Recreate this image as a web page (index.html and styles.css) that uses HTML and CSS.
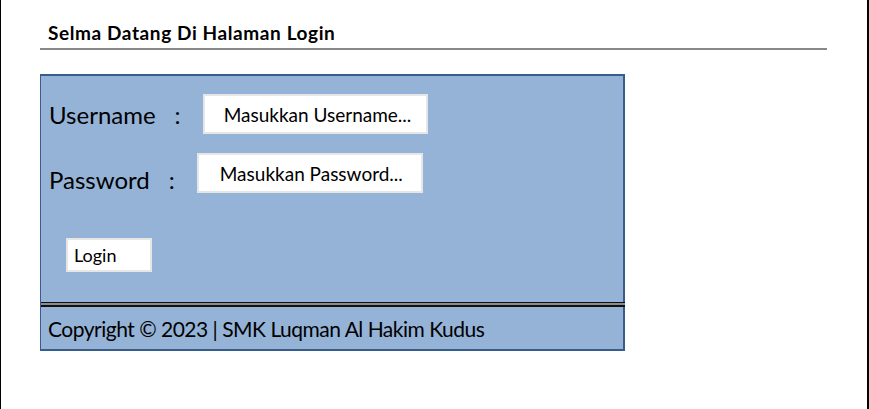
FILE: index.html
```html
<!DOCTYPE html>
<html lang="id">
<head>
<meta charset="utf-8">
<title>Login</title>
<link rel="stylesheet" href="styles.css">
</head>
<body>
<div class="page">
  <div class="header">
    <h1 class="title">Selma Datang Di Halaman Login</h1>
  </div>
  <div class="login-box">
    <form class="login-form">
      <div class="row row-user">
        <span class="label">Username</span>
        <span class="colon">:</span>
        <input class="field field-user" type="text" placeholder="Masukkan Username...">
      </div>
      <div class="row row-pass">
        <span class="label">Password</span>
        <span class="colon">:</span>
        <input class="field field-pass" type="password" placeholder="Masukkan Password...">
      </div>
      <button class="btn-login" type="button">Login</button>
    </form>
    <div class="separator"></div>
    <div class="footer">Copyright © 2023 | SMK Luqman Al Hakim Kudus</div>
  </div>
</div>
</body>
</html>
```

FILE: styles.css
```css
html, body {
  margin: 0;
  padding: 0;
  background: #ffffff;
}

body {
  font-family: Lato, "Open Sans", sans-serif;
  color: #000000;
}

.page {
  box-sizing: border-box;
  height: 409px;
  border-left: 1px solid #000000;
  border-right: 2px solid #000000;
  padding: 0 40px 0 39px;
}

.header {
  padding: 22px 0 4px 8px;
  border-bottom: 2px solid #888888;
}

.title {
  margin: 0;
  font-size: 19px;
  line-height: 22px;
  font-weight: 700;
  letter-spacing: 0.6px;
}

.login-box {
  margin-top: 24px;
  width: 582px;
  background: #95b3d7;
  border: 2px solid #385d8a;
  border-left-width: 1px;
}

.login-form {
  display: flex;
  flex-direction: column;
  align-items: flex-start;
  padding: 18px 0 30px 8px;
}

.row {
  display: flex;
  align-items: center;
  height: 40px;
  font-size: 24px;
}

.row-pass {
  margin-top: 19px;
}

.row-pass .label,
.row-pass .colon {
  margin-top: 13px;
}

.colon {
  margin-left: 19px;
}

.field {
  box-sizing: border-box;
  height: 40px;
  width: 225px;
  margin-left: 22px;
  border: 2px solid #e6e6e6;
  background: #ffffff;
  font-family: inherit;
  font-size: 19px;
  color: #000000;
  outline: none;
}

.field-user {
  padding: 0 0 0 19px;
}

.field-pass {
  width: 226px;
  padding: 0 0 0 21px;
}

.field::placeholder {
  color: #000000;
  opacity: 1;
}

.btn-login {
  margin: 45px 0 0 17px;
  box-sizing: border-box;
  width: 86px;
  height: 34px;
  padding: 0 0 0 6px;
  text-align: left;
  background: #ffffff;
  border: 2px solid #e6e6e6;
  font-family: inherit;
  font-size: 18px;
  color: #000000;
}

.separator {
  height: 2px;
  background: #8c8c8c;
  border-top: 1px solid #111111;
  border-bottom: 2px solid #111111;
  margin-right: -2px;
}

.footer {
  height: 42px;
  padding-left: 7px;
  font-size: 21px;
  line-height: 44px;
  letter-spacing: -0.5px;
}
```
